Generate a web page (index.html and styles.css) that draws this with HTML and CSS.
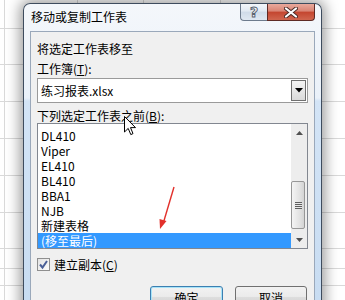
FILE: index.html
```html
<!DOCTYPE html>
<html lang="zh-CN">
<head>
    <meta charset="UTF-8">
    <title>移动或复制工作表</title>
    <link rel="stylesheet" href="styles.css">
</head>
<body>
    <div class="desk">
        <div class="dialog">
            <div class="titlebar">
                <span class="title">移动或复制工作表</span>
                <div class="caption">
                    <span class="btn-help">?</span>
                    <span class="btn-close">
                        <svg width="14" height="11" viewBox="0 0 14 11">
                            <path d="M2 1.5 L12 9.5 M12 1.5 L2 9.5" stroke="#4a2a26" stroke-width="4" stroke-linecap="round"/>
                            <path d="M2 1.5 L12 9.5 M12 1.5 L2 9.5" stroke="#fff" stroke-width="2.2" stroke-linecap="round"/>
                        </svg>
                    </span>
                </div>
            </div>
            <div class="client">
                <div class="label">将选定工作表移至</div>
                <div class="label label-book">工作簿(<u>T</u>):</div>
                <div class="combo">
                    <span class="combo-text">练习报表.xlsx</span>
                    <span class="combo-btn">
                        <svg width="8" height="5" viewBox="0 0 8 5"><path d="M0 0 H8 L4 4.5 Z" fill="#000"/></svg>
                    </span>
                </div>
                <div class="label label-before">下列选定工作表之前(<u>B</u>):</div>
                <div class="listbox">
                    <ul class="items">
                        <li>DL410</li>
                        <li>Viper</li>
                        <li>EL410</li>
                        <li>BL410</li>
                        <li>BBA1</li>
                        <li>NJB</li>
                        <li>新建表格</li>
                        <li class="selected">(移至最后)</li>
                    </ul>
                    <div class="scrollbar">
                        <div class="sb-arrow">
                            <svg width="7" height="4" viewBox="0 0 7 4"><path d="M0 4 H7 L3.5 0 Z" fill="#505050"/></svg>
                        </div>
                        <div class="sb-track">
                            <div class="sb-thumb"><span class="grip"></span></div>
                        </div>
                        <div class="sb-arrow">
                            <svg width="7" height="4" viewBox="0 0 7 4"><path d="M0 0 H7 L3.5 4 Z" fill="#505050"/></svg>
                        </div>
                    </div>
                </div>
                <div class="check-row">
                    <span class="checkbox">
                        <svg width="11" height="11" viewBox="0 0 11 11"><path d="M2 5.5 L4.5 8.5 L9 2" stroke="#4a5f97" stroke-width="2" fill="none"/></svg>
                    </span>
                    <span>建立副本(<u>C</u>)</span>
                </div>
                <div class="buttons">
                    <span class="btn btn-default">确定</span>
                    <span class="btn">取消</span>
                </div>
            </div>
        </div>

        <svg class="red-arrow" width="30" height="50" viewBox="0 0 30 50">
            <path d="M25 1 L14 38" stroke="#e2302b" stroke-width="1.4" fill="none"/>
            <path d="M11 43 L10.5 33 L17.5 35 Z" fill="#e2302b"/>
        </svg>

        <svg class="cursor" width="13" height="20" viewBox="0 0 13 20">
            <path d="M0.5 0.5 L0.5 16 L4.2 12.4 L6.8 18.6 L9 17.6 L6.5 11.6 L11.5 11.6 Z" fill="#fff" stroke="#000" stroke-width="1" stroke-linejoin="round"/>
        </svg>
    </div>
</body>
</html>
```

FILE: styles.css
```css
body {
    margin: 0;
    width: 345px;
    height: 300px;
    overflow: hidden;
    font: 12px "Noto Sans CJK SC", "Noto Sans", sans-serif;
    color: #000;
    background-color: #fff;
    background-image:
        linear-gradient(#d9d9d9, #d9d9d9),
        linear-gradient(#d9d9d9, #d9d9d9),
        linear-gradient(#d9d9d9, #d9d9d9),
        linear-gradient(#d9d9d9, #d9d9d9),
        linear-gradient(#d9d9d9, #d9d9d9),
        linear-gradient(#d9d9d9, #d9d9d9),
        linear-gradient(#d9d9d9, #d9d9d9),
        linear-gradient(#d9d9d9, #d9d9d9),
        linear-gradient(#d9d9d9, #d9d9d9),
        linear-gradient(#d9d9d9, #d9d9d9),
        linear-gradient(#d9d9d9, #d9d9d9),
        linear-gradient(#d9d9d9, #d9d9d9),
        linear-gradient(#d9d9d9, #d9d9d9);
    background-repeat: no-repeat;
    background-size:
        1px 100%, 1px 3px, 1px 3px, 1px 3px,
        100% 1px, 100% 1px, 100% 1px, 100% 1px, 100% 1px,
        100% 1px, 100% 1px, 100% 1px, 100% 1px;
    background-position:
        4px 0, 77px 0, 143px 0, 220px 0,
        0 28px, 0 64px, 0 101px, 0 138px, 0 175px,
        0 212px, 0 248px, 0 268px, 0 285px;
}
.desk {
    position: relative;
    height: 300px;
    padding-top: 3px;
    box-sizing: border-box;
}
.dialog {
    margin-left: 23px;
    width: 299px;
    height: 330px;
    box-sizing: border-box;
    border: 1px solid #3e4c5e;
    border-bottom: none;
    border-radius: 7px 7px 0 0;
    background: linear-gradient(180deg, #f4f7fb 0, #eaf1f9 94px, #d3e4f6 97px, #c6dbf1 100%);
    box-shadow: 0 0 14px 3px rgba(0, 0, 0, 0.4);
}
.titlebar {
    display: flex;
    align-items: flex-start;
    height: 27px;
}
.title {
    flex: 1;
    padding: 5px 0 0 7px;
    line-height: 15px;
}
.caption {
    display: flex;
    margin-right: 6px;
}
.btn-help {
    width: 26px;
    height: 16px;
    border: 1px solid #6d7b8d;
    border-top: none;
    border-right: none;
    border-radius: 0 0 0 4px;
    background: linear-gradient(180deg, #f3f6fa 0, #e1e9f3 45%, #cfdbe9 50%, #dfe8f2 100%);
    color: #fff;
    -webkit-text-stroke: 1px #5a6472;
    font: bold 14px "DejaVu Sans", sans-serif;
    line-height: 16px;
    text-align: center;
}
.btn-close {
    display: flex;
    align-items: center;
    justify-content: center;
    width: 46px;
    height: 16px;
    border: 1px solid #5d2a25;
    border-top: none;
    border-radius: 0 0 4px 0;
    background: linear-gradient(180deg, #e9a99c 0, #d98474 45%, #c4452f 50%, #d0664f 100%);
}
.client {
    margin: 0 6px;
    height: 300px;
    box-sizing: border-box;
    padding: 9px 6px 0 6px;
    border: 1px solid #9aa8ba;
    background: #f0f0f0;
}
.label {
    line-height: 15px;
}
.label-book {
    margin-top: 5px;
}
.label-before {
    margin-top: 5px;
}
.combo {
    display: flex;
    align-items: center;
    height: 25px;
    margin-top: 2px;
    box-sizing: border-box;
    border: 1px solid #9a9a9a;
    background: #fff;
}
.combo-text {
    flex: 1;
    padding-left: 3px;
    line-height: 15px;
}
.combo-btn {
    display: flex;
    align-items: center;
    justify-content: center;
    width: 15px;
    height: 21px;
    margin-right: 1px;
    box-sizing: border-box;
    border: 1px solid #707070;
    background: linear-gradient(180deg, #f4f4f4, #dadada);
}
.listbox {
    display: flex;
    height: 126px;
    box-sizing: border-box;
    border: 1px solid #828790;
    background: #fff;
}
.items {
    flex: 1;
    margin: 0;
    padding: 4px 0 0 0;
    list-style: none;
}
.items li {
    height: 15px;
    line-height: 15px;
    padding-left: 3px;
}
.items li.selected {
    background: #3399ff;
    color: #fff;
}
.scrollbar {
    display: flex;
    flex-direction: column;
    width: 16px;
    background: #ededed;
}
.sb-arrow {
    display: flex;
    align-items: center;
    justify-content: center;
    height: 17px;
}
.sb-track {
    flex: 1;
}
.sb-thumb {
    display: flex;
    align-items: center;
    justify-content: center;
    width: 14px;
    height: 48px;
    margin-top: 40px;
    box-sizing: border-box;
    border: 1px solid #979797;
    border-radius: 2px;
    background: linear-gradient(90deg, #f4f4f4, #e3e3e3 60%, #d4d4d4);
}
.grip {
    width: 7px;
    height: 7px;
    background: repeating-linear-gradient(180deg, #5f5f5f 0, #5f5f5f 1px, #e8e8e8 1px, #e8e8e8 2px);
}
.check-row {
    display: flex;
    align-items: center;
    gap: 4px;
    margin-top: 8px;
    line-height: 15px;
}
.checkbox {
    display: flex;
    align-items: center;
    justify-content: center;
    width: 13px;
    height: 13px;
    box-sizing: border-box;
    border: 1px solid #8f8f8f;
    background: linear-gradient(135deg, #e3e3e3, #fbfbfb);
}
.buttons {
    display: flex;
    justify-content: flex-end;
    gap: 12px;
    margin-top: 14px;
    padding-right: 1px;
}
.btn {
    width: 72px;
    height: 23px;
    box-sizing: border-box;
    border: 1px solid #707070;
    border-radius: 3px;
    background: linear-gradient(180deg, #f2f2f2 0, #ebebeb 45%, #dddddd 50%, #cfcfcf 100%);
    line-height: 21px;
    text-align: center;
}
.btn-default {
    width: 73px;
    border-color: #3c7fb1;
    box-shadow: inset 0 0 0 1px #a7e3f8;
}
.red-arrow {
    position: absolute;
    left: 149px;
    top: 186px;
}
.cursor {
    position: absolute;
    left: 124px;
    top: 116px;
}
```
